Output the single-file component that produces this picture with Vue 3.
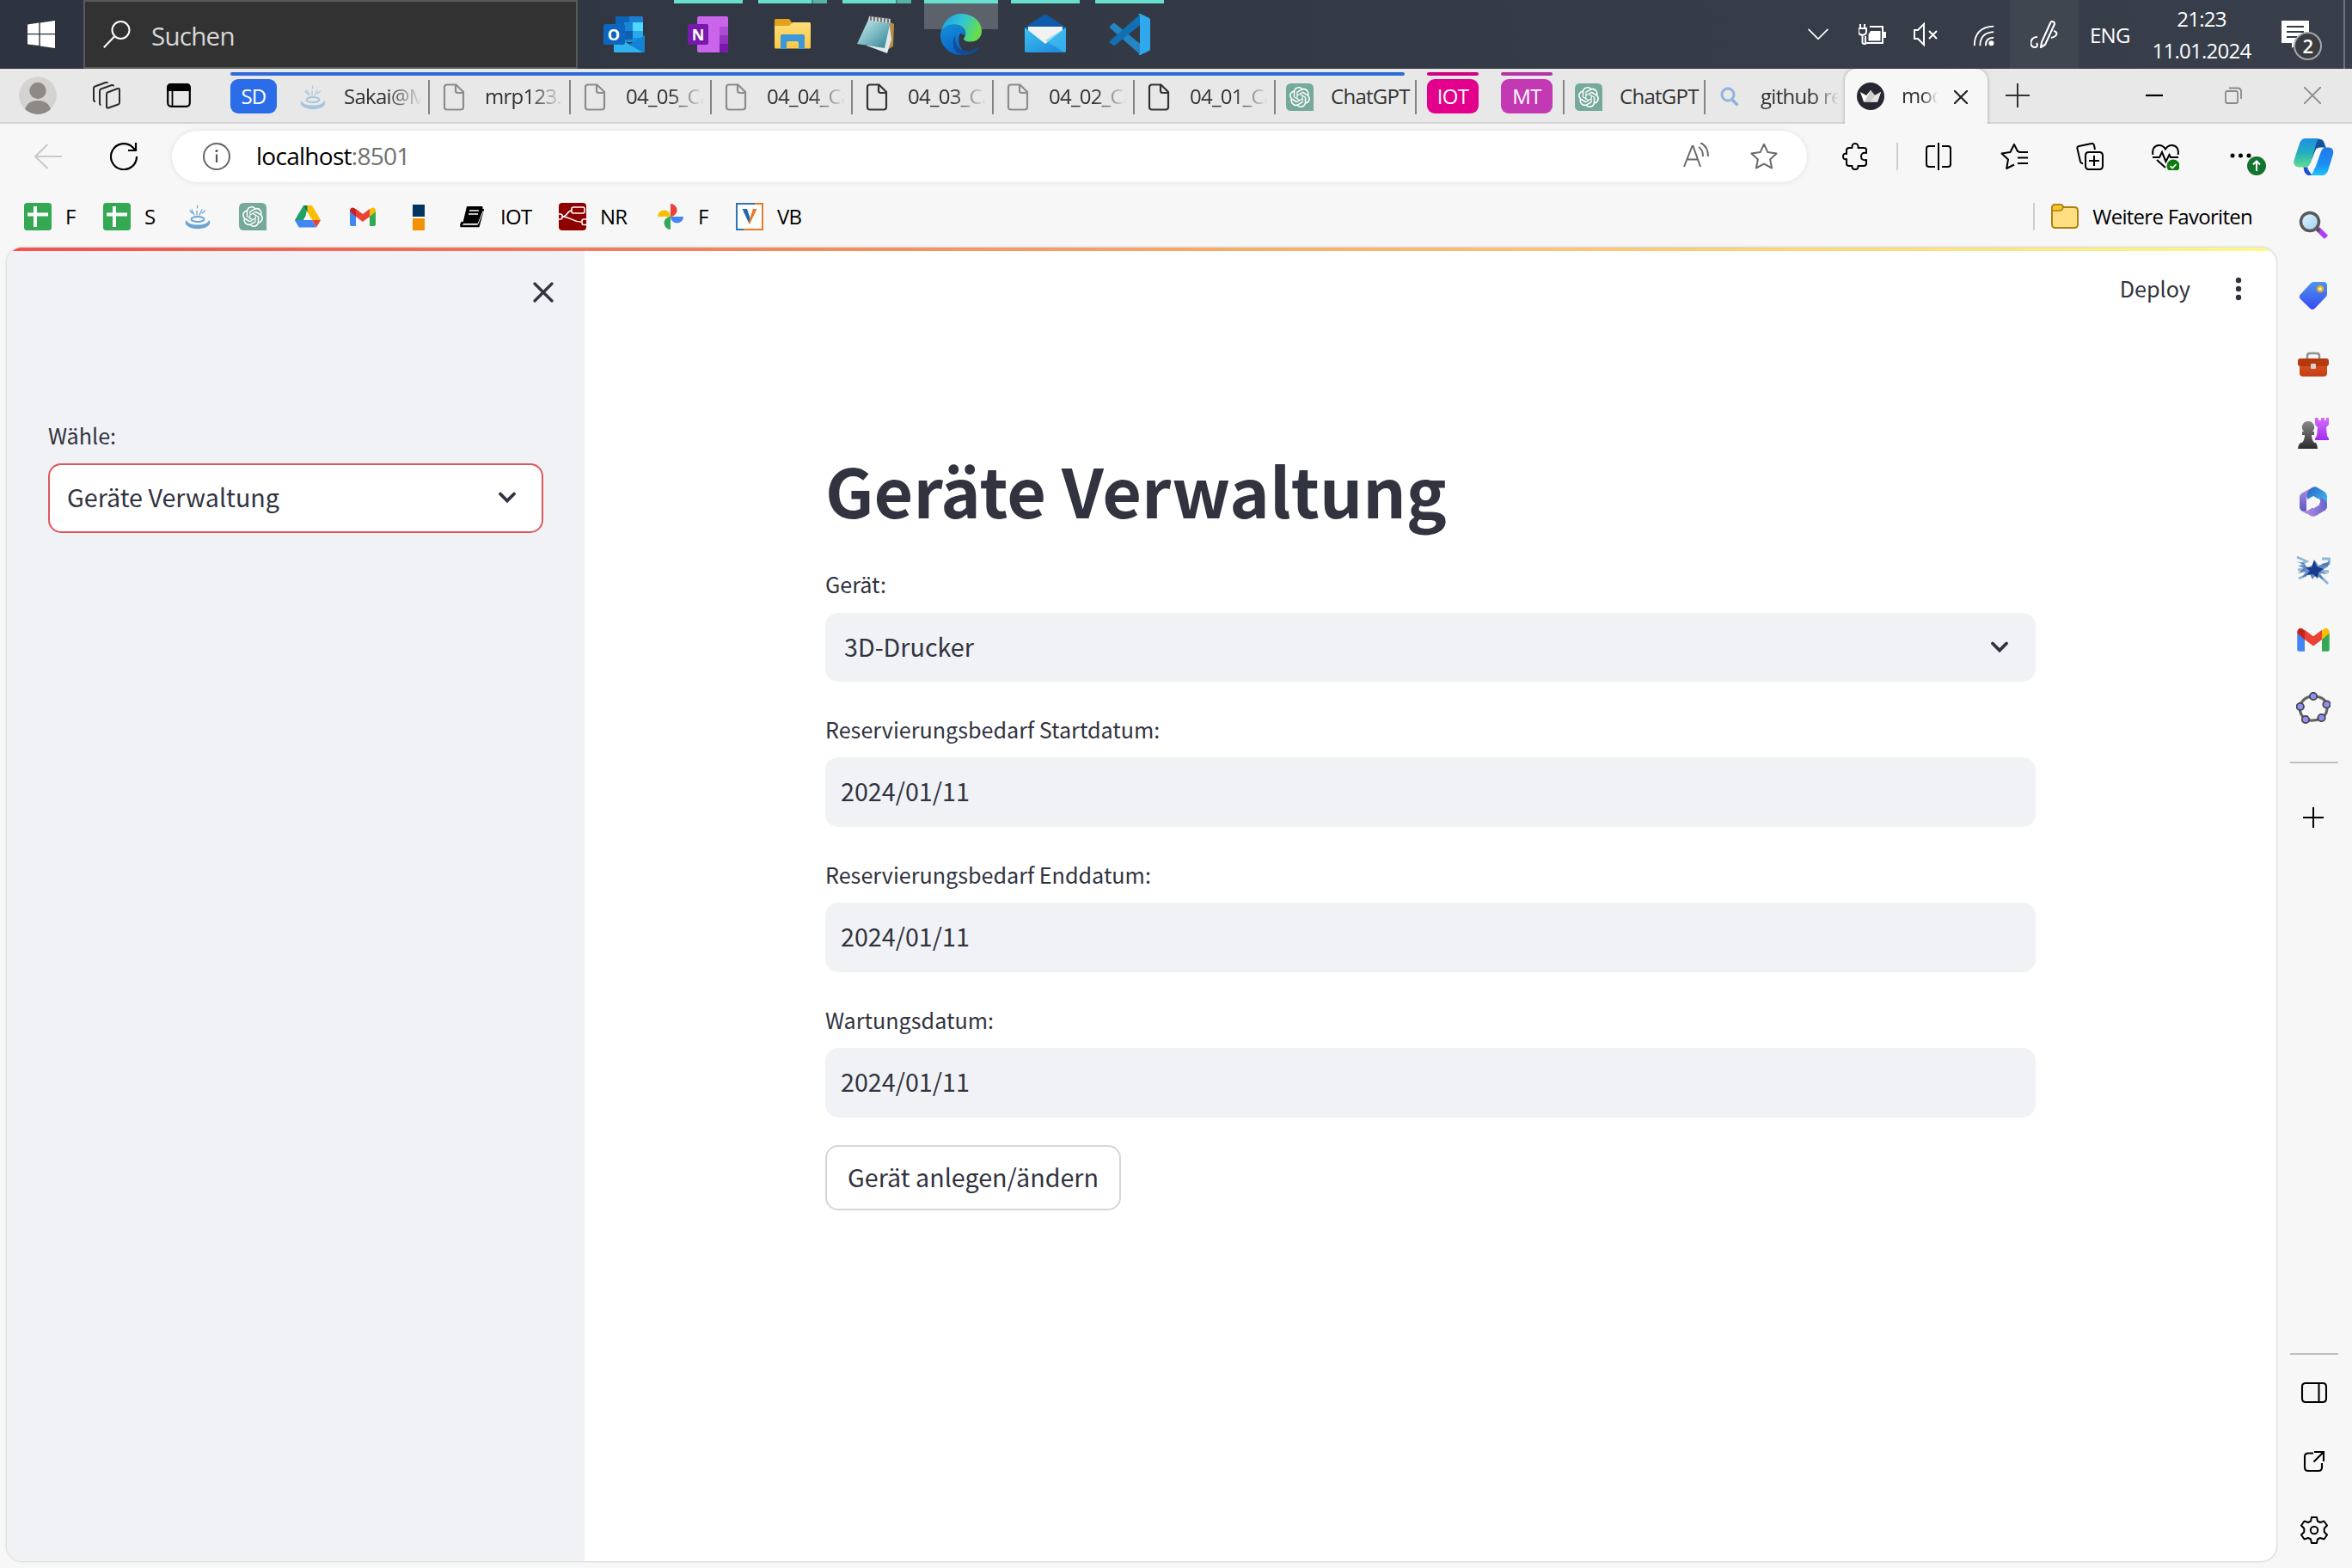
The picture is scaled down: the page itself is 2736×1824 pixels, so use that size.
<script setup>
const slots = [
  { id: 'outlook', bar: '', letter: 'O' },
  { id: 'onenote', bar: 'one', letter: 'N' },
  { id: 'explorer', bar: 'many' },
  { id: 'notepad', bar: 'many' },
  { id: 'edge', bar: 'active' },
  { id: 'mail', bar: 'one' },
  { id: 'vscode', bar: 'one' },
]
const tabs = [
  { icon: 'java', text: 'Sakai@M', pale: true },
  { icon: 'file', text: 'mrp123.g', pale: true },
  { icon: 'file', text: '04_05_Ca', pale: true },
  { icon: 'file', text: '04_04_Ca', pale: true },
  { icon: 'file', text: '04_03_Ca' },
  { icon: 'file', text: '04_02_Ca', pale: true },
  { icon: 'file', text: '04_01_Ca' },
  { icon: 'gpt', text: 'ChatGPT', full: true },
]
const bookmarks = [
  { icon: 'sheets', text: 'F', w: 12 },
  { icon: 'sheets', text: 'S', w: 14 },
  { icon: 'java' },
  { icon: 'gpt' },
  { icon: 'drive' },
  { icon: 'gmail' },
  { icon: 'blocks' },
  { icon: 'book', text: 'IOT', w: 36 },
  { icon: 'nodered', text: 'NR', w: 34 },
  { icon: 'photos', text: 'F', w: 12 },
  { icon: 'vb', text: 'VB', w: 30 },
]
const tools = ['searchapp', 'tag', 'toolbox', 'chess', 'm365', 'eagle', 'gmail', 'geogebra']
const dates = [
  { label: 'Reservierungsbedarf Startdatum:', value: '2024/01/11' },
  { label: 'Reservierungsbedarf Enddatum:', value: '2024/01/11' },
  { label: 'Wartungsdatum:', value: '2024/01/11' },
]
</script>

<template>
  <svg width="0" height="0" class="sprite">
    <defs>
      <linearGradient id="gEdgeA" x1="0" y1="0" x2="1" y2="0.3"><stop offset="0" stop-color="#1f9fe0" /><stop offset=".55" stop-color="#2fc5d6" /><stop offset="1" stop-color="#67dd4e" /></linearGradient>
      <linearGradient id="gEdgeB" x1="0" y1="0" x2="0.4" y2="1"><stop offset="0" stop-color="#1392dc" /><stop offset="1" stop-color="#0a63c4" /></linearGradient>
      <linearGradient id="gPad" x1="0" y1="0" x2="1" y2="1"><stop offset="0" stop-color="#d5eef0" /><stop offset=".5" stop-color="#7fbcc6" /><stop offset="1" stop-color="#2f7f92" /></linearGradient>
      <linearGradient id="gFold" x1="0" y1="0" x2="0" y2="1"><stop offset="0" stop-color="#ffdd79" /><stop offset="1" stop-color="#fbc745" /></linearGradient>
      <linearGradient id="gMail" x1="0" y1="0" x2="1" y2="1"><stop offset="0" stop-color="#3ec0f3" /><stop offset="1" stop-color="#1a86d8" /></linearGradient>
      <linearGradient id="gCopA" x1="0" y1="0" x2="0" y2="1"><stop offset="0" stop-color="#1f8fe3" /><stop offset=".5" stop-color="#22aec0" /><stop offset="1" stop-color="#62dd8c" /></linearGradient>
      <linearGradient id="gCopB" x1="0" y1="0" x2="0" y2="1"><stop offset="0" stop-color="#2377e8" /><stop offset=".6" stop-color="#1b8ef5" /><stop offset="1" stop-color="#20c3f7" /></linearGradient>
      <linearGradient id="gTag" x1="0" y1="0" x2="0" y2="1"><stop offset="0" stop-color="#4f93f0" /><stop offset="1" stop-color="#3848f0" /></linearGradient>
      <linearGradient id="gLens" x1="0" y1="0" x2="1" y2="1"><stop offset="0" stop-color="#e2f3fd" /><stop offset="1" stop-color="#9ed2f5" /></linearGradient>
      <linearGradient id="gPurple" x1="0" y1="0" x2="0" y2="1"><stop offset="0" stop-color="#d56cf7" /><stop offset="1" stop-color="#a02cf0" /></linearGradient>
      <linearGradient id="gPawn" x1="0" y1="0" x2="0" y2="1"><stop offset="0" stop-color="#8a8a8a" /><stop offset="1" stop-color="#2c2c2c" /></linearGradient>
      <linearGradient id="gBox" x1="0" y1="0" x2="0" y2="1"><stop offset="0" stop-color="#d9501c" /><stop offset="1" stop-color="#c03f14" /></linearGradient>
      <linearGradient id="gM1" x1="0" y1="0" x2="0" y2="1"><stop offset="0" stop-color="#b48be0" /><stop offset="1" stop-color="#4f55c8" /></linearGradient>
      <linearGradient id="gM2" x1="0" y1="0" x2="1" y2="1"><stop offset="0" stop-color="#2a62c4" /><stop offset="1" stop-color="#3fc5f2" /></linearGradient>
      <linearGradient id="gM3" x1="0" y1="0" x2="1" y2="0"><stop offset="0" stop-color="#c191e0" /><stop offset="1" stop-color="#6463cf" /></linearGradient>
    </defs>

    <symbol id="outlook" viewBox="0 0 48 48">
      <rect x="14" y="3" width="32" height="30" rx="2" fill="#1490df" />
      <path d="M14 5q0-2 2-2h14v10H14z" fill="#0c64b8" /><path d="M30 3h14q2 0 2 2v8H30z" fill="#1a7fd0" />
      <path d="M24 10h10v10H24z" fill="#1a86da" /><path d="M34 10h12v10H34z" fill="#50d9ff" /><path d="M24 20h10v10H24z" fill="#0f5fae" /><path d="M34 20h12v8H34z" fill="#28a8ea" />
      <path d="M48 25v18q0 2-2 2H14q-2 0-2-2V25l18 11z" fill="#1f9de6" /><path d="M12 25v18q0 2 2 2h32L24 32z" fill="#2fb4f0" /><path d="M48 25 30 36l16 9q2 0 2-2z" fill="#1482d4" />
      <rect x="0" y="12" width="25" height="24" rx="2" fill="#0c66bd" />
    </symbol>
    <symbol id="onenote" viewBox="0 0 48 48">
      <rect x="11" y="3" width="36" height="42" rx="2" fill="#ca64ea" />
      <path d="M37 15h10v10H37z" fill="#ae4bd5" /><path d="M37 25h10v10H37z" fill="#9332bf" /><path d="M37 35h10v8q0 2-2 2h-8z" fill="#7719aa" />
      <rect x="0" y="12" width="24" height="24" rx="2" fill="#7719aa" />
    </symbol>
    <symbol id="explorer" viewBox="0 0 48 48">
      <path d="M3 7.500q0-1.500 1.500-1.500H20l3 4v6H3z" fill="#e3a21a" />
      <path d="M3 14h17l4-4h19.500q1.500 0 1.500 1.500v27.500q0 1.500-1.500 1.500H4.500Q3 40.500 3 39z" fill="url(#gFold)" />
      <path d="M10 41V26q0-2 2-2h24q2 0 2 2v15h-7v-7q0-2-2-2H19q-2 0-2 2v7z" fill="#3a97d9" />
    </symbol>
    <symbol id="notepad" viewBox="0 0 48 48">
      <path d="M36 8l8 4-1 26-9 5z" fill="#b98b3e" /><path d="M38 8 41 30 36 46 12 37z" fill="#e4eaec" />
      <path d="M15 5 40 8 33 40 1 35z" fill="url(#gPad)" /><path d="M15 3 40 6l-1 5-25-3z" fill="#cfd6d8" />
      <path d="M17 2v6M21 2.500v6M25 3v6M29 3.500v6M33 4v6M37 4.500v6" stroke="#555" stroke-width="1.500" />
    </symbol>
    <symbol id="edge" viewBox="0 0 48 48">
      <path d="M1 21C3 8 13 0 24 0c14 0 24 9.500 24 20 0 8-6 12.500-13 12.500-5 0-8-1.500-8-3.200 0-1.500 2.300-2.300 2.300-6.300C29.300 17 24 12.500 17 12.500 9 12.500 3 16 1 21z" fill="url(#gEdgeA)" />
      <path d="M1 20C4 14.500 10 12 16 12.500 24 13 29 18 29 23c0 1-.3 2-.8 3-1.200-2-3.200-3-5.500-3-2 5-3 14 4 20 3 2.500 7 3 8 3C31 47.500 27 48 24 48 10 48 0 37 0 25c0-2 .4-3.500 1-5z" fill="url(#gEdgeB)" />
      <path d="M17.500 25c-2 10 4 18 13 18.500 5 .3 9-1.500 12.500-4.500 1-.8 2 0 1.300 1.200C40 46 33 48.300 25 48 15 46 12 33 17.500 25z" fill="#124c97" />
    </symbol>
    <symbol id="mail" viewBox="0 0 48 48">
      <path d="M0 16 21 2q3-2 6 0l21 14v8H0z" fill="#0e5bab" /><path d="M4 15h40v14L24 36 4 29z" fill="#f2f2f2" />
      <path d="M0 16 24 35 48 16v27q0 2-2 2H2q-2 0-2-2z" fill="url(#gMail)" /><path d="M48 16 24 31l22 14q2 0 2-2z" fill="#4ac8f5" opacity=".55" />
    </symbol>
    <symbol id="vscode" viewBox="0 0 48 48">
      <path d="M1.500 14 5 11.200q1-.7 2 0L37 35.500V48L1.200 16.500q-1.200-1.300.3-2.500z" fill="#2489ca" opacity=".95" />
      <path d="M1.500 34 5 36.800q1 .7 2 0L37 12.500V0L1.200 31.500q-1.200 1.300.3 2.500z" fill="#1070b3" />
      <path d="M34 47.500q1.500 1 3 .3l9.500-4.600q1.500-.8 1.500-2.500V7.300q0-1.700-1.500-2.500L37 .2q-1.500-.7-3 .3 2 0 2 2.500v42q0 2.500-2 2.500z" fill="#2fa8ee" />
    </symbol>

    <symbol id="file" viewBox="0 0 32 32"><path d="M8 1.500h10.500L27 10v17.500q0 3-3 3H8q-3 0-3-3v-23q0-3 3-3zM18 2v6.500q0 2.500 2.500 2.500H27" fill="none" stroke="currentColor" stroke-width="2.200" /></symbol>
    <symbol id="java" viewBox="0 0 32 32">
      <g fill="none" stroke="#6ba4d2" stroke-linecap="round"><path d="M15 14V9M12 14 9 8M18 14l3-6M15.500 6V3M9.500 12 7 9M21 12l3.500-3" stroke-width="1.200" />
        <ellipse cx="16" cy="19" rx="7.500" ry="3" stroke-width="2" /></g>
      <path d="M3 20c-2 2-2 5 2 7.500 6 3.500 16 3.500 22 0 4-2.500 4-5.500 2-7.500-1 4-6 5.500-13 5.500S4 24 3 20z" fill="#6ba4d2" />
    </symbol>
    <symbol id="gpt" viewBox="0 0 32 32">
      <path d="M6 0h20q6 0 6 6v26H6q-6 0-6-6V6q0-6 6-6z" fill="#75a99b" />
      <path transform="translate(4 4)" fill="#fff" d="M22.2819 9.8211a5.9847 5.9847 0 0 0-.5157-4.9108 6.0462 6.0462 0 0 0-6.5098-2.9A6.0651 6.0651 0 0 0 4.9807 4.1818a5.9847 5.9847 0 0 0-3.9977 2.9 6.0462 6.0462 0 0 0 .7427 7.0966 5.98 5.98 0 0 0 .511 4.9107 6.051 6.051 0 0 0 6.5146 2.9001A5.9847 5.9847 0 0 0 13.2599 24a6.0557 6.0557 0 0 0 5.7718-4.2058 5.9894 5.9894 0 0 0 3.9977-2.9001 6.0557 6.0557 0 0 0-.7475-7.0729zm-9.022 12.6081a4.4755 4.4755 0 0 1-2.8764-1.0408l.1419-.0804 4.7783-2.7582a.7948.7948 0 0 0 .3927-.6813v-6.7369l2.02 1.1686a.071.071 0 0 1 .038.052v5.5826a4.504 4.504 0 0 1-4.4945 4.4944zm-9.6607-4.1254a4.4708 4.4708 0 0 1-.5346-3.0137l.142.0852 4.783 2.7582a.7712.7712 0 0 0 .7806 0l5.8428-3.3685v2.3324a.0804.0804 0 0 1-.0332.0615L9.74 19.9502a4.4992 4.4992 0 0 1-6.1408-1.6464zM2.3408 7.8956a4.485 4.485 0 0 1 2.3655-1.9728V11.6a.7664.7664 0 0 0 .3879.6765l5.8144 3.3543-2.0201 1.1685a.0757.0757 0 0 1-.071 0l-4.8303-2.7865A4.504 4.504 0 0 1 2.3408 7.872zm16.5963 3.8558L13.1038 8.364 15.1192 7.2a.0757.0757 0 0 1 .071 0l4.8303 2.7913a4.4944 4.4944 0 0 1-.6765 8.1042v-5.6772a.79.79 0 0 0-.407-.667zm2.0107-3.0231l-.142-.0852-4.7735-2.7818a.7759.7759 0 0 0-.7854 0L9.409 9.2297V6.8974a.0662.0662 0 0 1 .0284-.0615l4.8303-2.7866a4.4992 4.4992 0 0 1 6.6802 4.66zM8.3065 12.863l-2.02-1.1638a.0804.0804 0 0 1-.038-.0567V6.0742a4.4992 4.4992 0 0 1 7.3757-3.4537l-.142.0805L8.704 5.459a.7948.7948 0 0 0-.3927.6813zm1.0976-2.3654l2.602-1.4998 2.6069 1.4998v2.9994l-2.5974 1.4997-2.6067-1.4997Z" />
    </symbol>
    <symbol id="sheets" viewBox="0 0 32 32"><rect width="32" height="32" rx="3.500" fill="#34a853" /><path d="M13 4v24M4 13.500h24" stroke="#fff" stroke-width="4" /></symbol>
    <symbol id="drive" viewBox="0 0 32 32">
      <path d="M11 3 1 20l5 8.500 7.500-13L16 3z" fill="#1ea362" /><path d="M11 3h10l-5 8.500z" fill="#188038" /><path d="M21 3h-5.500v8L21 20h10z" fill="#fbbc04" /><path d="M31 20H21l5 8.500z" fill="#ea4335" /><path d="M1 20h20l5 8.500H6z" fill="#4285f4" /><path d="M16 11.500 11 20h10z" fill="#f7f7f7" />
    </symbol>
    <symbol id="gmail" viewBox="0 0 32 32">
      <path d="M1 10v15q0 2 2 2h5V14z" fill="#4285f4" /><path d="M31 10v15q0 2-2 2h-5V14z" fill="#34a853" />
      <path d="M8 7v9l8 6 8-6V7l-8 6z" fill="#ea4335" /><path d="M1 9v1l7 6V7.500L6 6C4 4.500 1 6 1 9z" fill="#c5221f" /><path d="M31 9v1l-7 6V7.500L26 6c2-1.500 5 0 5 3z" fill="#fbbc04" />
    </symbol>
    <symbol id="blocks" viewBox="0 0 32 32"><path d="M10 2h14v14H10z" fill="#003560" /><path d="M10 18h14v14H10z" fill="#f39200" /></symbol>
    <symbol id="book" viewBox="0 0 32 32">
      <path d="M9 4h17q2 0 1.500 2L23 23q-.5 2-2.500 2H4z" fill="#000" /><path d="M4 22q-2 3-1.500 5h20L28 7" fill="none" stroke="#000" stroke-width="2.500" /><path d="M12 9h11M11 13h11" stroke="#fff" stroke-width="1.600" /><path d="M5 24.500h17l6-15" fill="none" stroke="#fff" stroke-width="1" />
    </symbol>
    <symbol id="nodered" viewBox="0 0 32 32">
      <rect width="32" height="32" rx="4" fill="#8f0000" /><g fill="none" stroke="#fff" stroke-width="1.600"><rect x="15" y="5" width="15" height="7" rx="2" /><path d="M0 13h2q2 0 2 2v2q0 2-2 2H0M32 19h-3q-2 0-2 2v2.500q0 2 2 2h3M4 16c7 0 5-7 11-7M4 16c10 0 11 6 22 6" /></g>
    </symbol>
    <symbol id="photos" viewBox="0 0 32 32">
      <path d="M16 1a7.500 7.500 0 0 1 0 15z" fill="#ea4335" /><path d="M31 16a7.500 7.500 0 0 1-15 0z" fill="#4285f4" /><path d="M16 31a7.500 7.500 0 0 1 0-15z" fill="#34a853" /><path d="M1 16a7.500 7.500 0 0 1 15 0z" fill="#fbbc04" />
    </symbol>
    <symbol id="vb" viewBox="0 0 32 32">
      <path d="M1 1h30v30H1z" fill="#fff" /><path d="M22 1H1v30h8" fill="none" stroke="#2b78b8" stroke-width="2" /><path d="M22 1h9v30H9" fill="none" stroke="#e8792b" stroke-width="2" />
      <path d="M7.500 7h5.500l4 12-1.500 5.500z" fill="#1f6ab0" /><path d="M24.500 7H20l-5 15 1 3z" fill="#e8792b" />
    </symbol>

    <symbol id="searchapp" viewBox="0 0 40 40"><path d="m25 24 10 10" stroke="#b23df2" stroke-width="6" /><path d="m22 22 5 5" stroke="#555" stroke-width="4" /><circle cx="16" cy="16" r="10.500" fill="url(#gLens)" stroke="#5a5a5e" stroke-width="3.500" /></symbol>
    <symbol id="tag" viewBox="0 0 40 40"><path d="M20 4h12q4 0 4 4v10q0 2-1.500 3.500L22 34.500q-3 3-6 0L5 24q-2.500-3 0-5.500L17 5.500Q18.500 4 20 4z" fill="url(#gTag)" /><circle cx="28" cy="12" r="3" fill="#fff" stroke="#e0b020" stroke-width="2.500" /></symbol>
    <symbol id="toolbox" viewBox="0 0 40 40"><path d="M13 13V10q0-3 3-3h8q3 0 3 3v3" fill="none" stroke="#8f8f8f" stroke-width="2.500" /><path d="M4 20h32v10q0 4-4 4H8q-4 0-4-4z" fill="url(#gBox)" /><path d="M5 13h30q3 0 3 3v3q0 3-3 3H5q-3 0-3-3v-3q0-3 3-3z" fill="#b5380f" /><rect x="17" y="19" width="6" height="6" rx="1" fill="#d4d4d4" /></symbol>
    <symbol id="chess" viewBox="0 0 40 40"><path d="M22 2h4v3h3V2h4v3h2V2h3v8l-3 3 1 10 2 3v2H22v-2l2-3 1-10-3-3z" fill="url(#gPurple)" /><path d="M14 6a7 7 0 0 1 5 12h2v4h-3q0 6 3 9h2q2 3 2 7H2q0-4 3-7h2q3-3 3-9H7v-4h2A7 7 0 0 1 14 6z" fill="url(#gPawn)" /></symbol>
    <symbol id="m365" viewBox="0 0 40 40">
      <path d="M19 3 7 9.500q-3 1.500-3 5v11q0 3.500 3 5l6 3.500q-1-2-1-4V15l7-5z" fill="url(#gM1)" /><path d="M19 3q3-1.500 6 .2L33 8q3 2 3 5v12L26 16 13 22V10q0-3 6-7z" fill="url(#gM2)" /><path d="M36 24v1q0 3.500-3 5l-10 6q-3 1.500-6 0l-10-6q5 1 8-1l13-8V15q8 2 8 9z" fill="url(#gM3)" /><path d="M20 13 27 17v6.500l-7 4-7-4V17z" fill="#f7f7f7" />
    </symbol>
    <symbol id="eagle" viewBox="0 0 40 40">
      <g fill="none" stroke="#8fb9d6" stroke-width="3"><path d="M1 4 12 9 6 12M30 6h9l-1 6-8 1M3 29l9-4M28 26l9 9M2 19l8-1M38 21l-8-1" /></g>
      <path d="M0 9 9 11l4 5 5-2 4-6 4 6 13-5-2 6-8 5 8 4-9-1 4 8-9-6-4 5-3-6-9 4 4-7-9 2 7-6-7-3 7-1z" fill="#3567ab" opacity=".75" /><path d="m21 7 3 8 8 3-6 4-1 7-5-5-8 1 4-5-5-4 7 0z" fill="#153c8f" />
    </symbol>
    <symbol id="geogebra" viewBox="0 0 40 40">
      <path d="M20 6q13 0 16 10 1 11-6 15-9 5-19 2-7-5-7-15Q8 6 20 6z" fill="none" stroke="#666" stroke-width="3.200" stroke-linejoin="round" />
      <g fill="#8f8ff5" stroke="#444" stroke-width="1.800"><circle cx="20" cy="6" r="4.200" /><circle cx="35.500" cy="15.500" r="4.200" /><circle cx="29.500" cy="31" r="4.200" /><circle cx="11" cy="33" r="4.200" /><circle cx="4.800" cy="18" r="4.200" /></g>
    </symbol>
  </svg>

  <div class="screen">
    <header class="taskbar">
      <svg class="win" viewBox="0 0 32 32"><path d="M0 4.400 13.300 2.600V15H0zM14.700 2.400 32 0v15H14.700zM0 16.300h13.300V29L0 27.600zM14.700 16.300H32V32l-17.300-2.600z" fill="#fff" /></svg>
      <div class="search">
        <svg viewBox="0 0 32 32"><circle cx="20.500" cy="11" r="10" fill="none" stroke="#fff" stroke-width="2" /><path d="M13.500 18 .8 31.200" stroke="#fff" stroke-width="2" /></svg>
        <span>Suchen</span>
      </div>
      <nav class="slots">
        <div v-for="s in slots" :key="s.id" class="slot" :class="s.bar">
          <svg><use :href="'#' + s.id" /></svg><b v-if="s.letter">{{ s.letter }}</b>
        </div>
      </nav>
      <div class="tray">
        <svg class="ic" viewBox="0 0 32 32"><path d="m3 9 13 13L29 9" fill="none" stroke="#fff" stroke-width="2" /></svg>
        <svg class="ic bat" viewBox="0 0 32 32"><path d="M2 4v5M7 4v5M0 9h9v4q0 3-3 3.500H3Q0 16 0 13zM4.500 16v9q0 2 2 2H9" fill="none" stroke="#fff" stroke-width="2" /><path d="M13 7h15v19H8v-8" fill="none" stroke="#fff" stroke-width="2" /><path d="M14 12h11.500v11.500h-14V16zM29 13h3v7h-3z" fill="#fff" /></svg>
        <svg class="ic vol" viewBox="0 0 32 32"><path d="M2 11h4l7-7v24l-7-7H2zM19 12l9 9M28 12l-9 9" fill="none" stroke="#fff" stroke-width="2" /></svg>
        <svg class="ic wifi" viewBox="0 0 32 32"><g fill="none" stroke="#fff" stroke-width="2"><path d="M4 30Q4 7 28 6M11 30q0-16 17-17M18 30q0-10 10-10" /></g><circle cx="25" cy="27" r="3.200" fill="#fff" /></svg>
        <div class="pen"><svg viewBox="0 0 32 32"><path d="M25 1q3 0 3 3L17 28l-5 3 1-6L23 3q.7-2 2-2zM8 19c-9 0-10 12-3 12 4 0 3-4 2-5M27 12c5 1 5 6-3 8" fill="none" stroke="#fff" stroke-width="2.100" /></svg></div>
        <span class="lang">ENG</span>
        <div class="clock"><span>21:23</span><span>11.01.2024</span></div>
        <div class="note"><svg viewBox="0 0 36 48"><path d="M0 0h32v26H18l-6 6v-6H0z" fill="#fff" /><path d="M6 7h20M6 13h20M6 19h12" stroke="#333a45" stroke-width="2" /></svg><b>2</b></div>
        <i class="peek"></i>
      </div>
    </header>

    <div class="strip">
      <svg class="avatar" viewBox="0 0 44 44"><clipPath id="cpA"><circle cx="22" cy="22" r="22" /></clipPath><g clip-path="url(#cpA)"><circle cx="22" cy="22" r="22" fill="#d5d3d0" /><circle cx="22" cy="16.500" r="9.700" fill="#8d8a86" /><path d="M6 46q0-18 16-18t16 18z" fill="#8d8a86" /></g></svg>
      <svg class="ws" viewBox="0 0 32 32"><g fill="none" stroke="#2b2b2b" stroke-width="2" stroke-linejoin="round"><path d="M17 12.500 29 8q2-.5 2 1.500v15q0 1.500-1.500 2L18 30.500q-2 .5-2-1.500V15q0-2 1-2.500z" /><path d="M9.500 27q-1.500 0-1.500-2V11q0-2 1.500-2.500L22 4q2-.5 2 1.500" /><path d="M3 23q-2 0-2-2V7.500q0-1.500 1.500-2L15 1q2-.5 2 1" /></g></svg>
      <svg class="ta" viewBox="0 0 32 32"><rect x="3.200" y="3.200" width="25.600" height="25.600" rx="4" fill="none" stroke="#000" stroke-width="2.200" /><path d="M3 10V7q0-4 4-4h18q4 0 4 4v3zM8.500 10v18" stroke="#000" stroke-width="1.800" /></svg>
      <div class="group">
        <span class="badge sd">SD</span>
        <div v-for="t in tabs" :key="t.text" class="tab" :class="{ pale: t.pale }">
          <svg><use :href="'#' + t.icon" /></svg><span class="txt" :class="{ full: t.full }">{{ t.text }}</span>
        </div>
      </div>
      <span class="badge iot">IOT</span>
      <span class="badge mt">MT</span>
      <div class="tab lead"><svg><use href="#gpt" /></svg><span class="txt full">ChatGPT</span></div>
      <div class="tab gh"><svg viewBox="0 0 32 32"><circle cx="14" cy="13" r="7" fill="none" stroke="#8fb4dc" stroke-width="3" /><path d="m18.500 18.500 7 7" stroke="#8fb4dc" stroke-width="3.500" /></svg><span class="txt late">github re</span></div>
      <div class="tab on">
        <svg viewBox="0 0 32 32"><circle cx="16" cy="16" r="16" fill="#262730" /><path d="m4 11 7 4 5-6 5 6 7-4-4 11.500H8z" fill="#fff" /><path d="m16 9 5 6-3 7.500h-9z" fill="#ccc" /><path d="m28 11-4 11.500h-8l5-7.500z" fill="#e4e4e4" /></svg>
        <span class="txt">mod</span>
        <svg class="x" viewBox="0 0 16 16"><path d="m0 0 16 16M16 0 0 16" stroke="#222" stroke-width="2.200" /></svg>
      </div>
      <svg class="plus" viewBox="0 0 28 28"><path d="M14 0v28M0 14h28" stroke="#333" stroke-width="2" /></svg>
      <div class="winbtns">
        <span><svg viewBox="0 0 20 20"><path d="M0 10h20" stroke="#000" stroke-width="2.200" /></svg></span>
        <span><svg viewBox="0 0 20 20"><path d="M1 7q0-2 2-2h10q2 0 2 2v10q0 2-2 2H3q-2 0-2-2zM5 1.500h10q4 0 4 4V14" fill="none" stroke="#8a8a8a" stroke-width="1.800" /></svg></span>
        <span><svg viewBox="0 0 20 20"><path d="m0 0 20 20M20 0 0 20" stroke="#8a8a8a" stroke-width="1.800" /></svg></span>
      </div>
    </div>

    <div class="toolbar">
      <svg class="back" viewBox="0 0 32 32"><path d="M32 16H1M15.500 2 1 16l14.500 14" fill="none" stroke="#c9c9c9" stroke-width="2" /></svg>
      <svg class="reload" viewBox="0 0 32 32"><path d="M31 16A15 15 0 1 1 26 5l3.500 3.500M30 0v9h-9" fill="none" stroke="#000" stroke-width="2.200" /></svg>
      <div class="url">
        <svg class="info" viewBox="0 0 32 32"><circle cx="16" cy="16" r="15" fill="none" stroke="#666" stroke-width="2" /><path d="M16 13.500V23" stroke="#555" stroke-width="2.200" /><circle cx="16" cy="9.500" r="1.600" fill="#555" /></svg>
        <span class="addr">localhost<em>:8501</em></span>
        <svg class="aloud" viewBox="0 0 32 32"><path d="m2 28 9.500-24h1L21 28M5.500 19.500h13M19 5q5 3 5 11M21 0q9 4 9 16" fill="none" stroke="#6b6b6b" stroke-width="2" /></svg>
        <svg class="star" viewBox="0 0 32 32"><path d="m16 1.800 4.400 9.300 10.200 1.300-7.500 7 2 10.100L16 24.600l-9.100 4.900 2-10.100-7.500-7 10.200-1.300z" fill="none" stroke="#6b6b6b" stroke-width="2" stroke-linejoin="round" /></svg>
      </div>
      <div class="acts">
        <svg viewBox="0 0 32 32"><path d="M9 6q-3 0-3 3v4Q2 12 2 16t4 3v5q0 3 3 3h3.500q-.5 4 3.500 4t3.500-4H26q3 0 3-3v-4q-6 1-6-4t6-4V8q0-2-3-2h-6.500q.5-5-3.500-5t-3.500 5z" fill="none" stroke="#000" stroke-width="2" stroke-linejoin="round" /></svg>
        <i></i>
        <svg viewBox="0 0 32 32"><path d="M16 0v32M12 4H5Q2 4 2 7v18q0 3 3 3h7M20 4h7q3 0 3 3v18q0 3-3 3h-7" fill="none" stroke="#000" stroke-width="2" /></svg>
        <svg viewBox="0 0 32 32"><path d="M22 10.500 20 10 16 2l-4.500 9L1.500 12.500l7.500 7L7.200 30l8.800-4.500M21 11h11M20 17.500h12M20 24h12" fill="none" stroke="#000" stroke-width="2" stroke-linejoin="round" /></svg>
        <svg viewBox="0 0 32 32"><path d="M22 8 21 3q-.7-2.500-3-2L3.500 4Q1 4.600 1.500 7L5 22q.6 2 3 2M15 11h12q4 0 4 4v12q0 4-4 4H15q-4 0-4-4V15q0-4 4-4zM21 15v12M15 21h12" fill="none" stroke="#000" stroke-width="2" /></svg>
        <svg viewBox="0 0 32 32"><path d="M1.500 14C0 8 3 3 8.500 3 12 3 14.500 5 16 7.500 17.500 5 20 3 23.500 3 29 3 32 8 30.500 14M1 17h8l3-6 4.500 11 4-8 1.500 3h9M6 20l10 9" fill="none" stroke="#000" stroke-width="2" /><circle cx="25" cy="27" r="7.500" fill="#0f7b0f" /><path d="m21.500 27 2.500 2.500 4.500-4.500" fill="none" stroke="#fff" stroke-width="1.700" /></svg>
        <svg class="more" viewBox="0 0 44 44"><g fill="#000"><circle cx="5" cy="21" r="2.500" /><circle cx="14.500" cy="21" r="2.500" /><circle cx="24" cy="21" r="2.500" /></g><circle cx="33" cy="33" r="11.500" fill="#f7f7f7" /><circle cx="33" cy="33" r="11" fill="#13742f" /><path d="M33 39V27.500M29 31.500l4-4 4 4" fill="none" stroke="#fff" stroke-width="2" /></svg>
        <svg class="copilot" viewBox="0 0 48 48"><path d="M22 3h10q4 0 5.500 5l2 6H28l-6 14z" fill="#15509c" /><path d="M14 2h18q-3 1-4.500 6l-6 22Q19 37 15 37H7q-9 0-6-10L7 9q2-7 7-7z" fill="url(#gCopA)" /><path d="M12 37h5q3 10 9 10h-7q-4 0-6-5z" fill="#1a4fd0" /><path d="M26 47h-6q3-1 4.500-6l7-21q2-7 7-7h3q9 0 6 10l-5 16q-2 8-8 8z" fill="url(#gCopB)" /><path d="M33 13h6q-4 0-6 6l-6 17q-1.500 4-6 4h-5q3-1 4.500-5l5-16q2-6 7.500-6z" fill="#f7f7f7" /></svg>
      </div>
    </div>

    <div class="body">
      <div class="left">
        <div class="marks">
          <div v-for="(b, k) in bookmarks" :key="k" class="mark">
            <svg><use :href="'#' + b.icon" /></svg><span v-if="b.text" :style="{ width: b.w + 'px' }">{{ b.text }}</span>
          </div>
          <div class="others">
            <svg viewBox="0 0 32 32"><path d="M1 6q0-4 4-4h6q2 0 3 3h13q4 0 4 4v16q0 4-4 4H5q-4 0-4-4z" fill="#ffdf82" stroke="#ad7f10" stroke-width="2" /><path d="M1 9V6q0-4 4-4h6q2.500 0 3 3-1 4-4 4z" fill="#f5c62e" stroke="#ad7f10" stroke-width="1.600" /></svg>
            <span>Weitere Favoriten</span>
          </div>
        </div>
        <div class="page">
          <aside>
            <svg class="close" viewBox="0 0 24 24"><path d="m2 2 20 20M22 2 2 22" stroke="#31333f" stroke-width="3.200" stroke-linecap="round" /></svg>
            <label>Wähle:</label>
            <div class="select"><span>Geräte Verwaltung</span><svg viewBox="0 0 20 14"><path d="m2 2.500 8 8 8-8" fill="none" stroke="#31333f" stroke-width="3.800" stroke-linecap="round" /></svg></div>
          </aside>
          <main>
            <div class="top"><span>Deploy</span><svg viewBox="0 0 8 28"><circle cx="4" cy="4" r="3.200" /><circle cx="4" cy="14" r="3.200" /><circle cx="4" cy="24" r="3.200" /></svg></div>
            <div class="form">
              <h1>Geräte Verwaltung</h1>
              <label class="first">Gerät:</label>
              <div class="field sel"><span>3D-Drucker</span><svg viewBox="0 0 20 14"><path d="m2 2.500 8 8 8-8" fill="none" stroke="#31333f" stroke-width="3.800" stroke-linecap="round" /></svg></div>
              <template v-for="d in dates" :key="d.label">
                <label>{{ d.label }}</label>
                <div class="field"><span>{{ d.value }}</span></div>
              </template>
              <button>Gerät anlegen/ändern</button>
            </div>
          </main>
        </div>
      </div>
      <div class="rail">
        <svg v-for="t in tools" :key="t" class="tool"><use :href="'#' + t" /></svg>
        <hr />
        <svg class="add" viewBox="0 0 24 24"><path d="M12 0v24M0 12h24" stroke="#000" stroke-width="2" /></svg>
        <div class="grow"></div>
        <hr class="low" />
        <svg class="foot" viewBox="0 0 32 32"><path d="M6 5h20q4 0 4 4v14q0 4-4 4H6q-4 0-4-4V9q0-4 4-4zM21.500 5v22" fill="none" stroke="#000" stroke-width="2.100" /></svg>
        <svg class="foot" viewBox="0 0 32 32"><path d="M15 6.500H9q-4 0-4 4V23q0 4 4 4h12q4 0 4-4v-5M16 5h11v11M27 5 15.500 16.500" fill="none" stroke="#000" stroke-width="2.100" /></svg>
        <svg class="foot gear" viewBox="0 0 32 32"><path d="M13 1h6l1 4.500 3 1.500 4.500-1.500L31 10.500l-3.300 3.500v4l3.300 3.500-3.500 5L23 25l-3 1.500-1 4.500h-6l-1-4.500L9 25l-4.500 1.500L1 21.500 4.300 18v-4L1 10.500l3.500-5L9 7l3-1.500z" fill="none" stroke="#000" stroke-width="2" stroke-linejoin="round" /><circle cx="16" cy="16" r="4.200" fill="none" stroke="#000" stroke-width="2" /></svg>
      </div>
    </div>
  </div>
</template>

<style>
html, body { margin: 0; background: #f7f7f7; overflow: hidden; }
</style>

<style scoped>
* { box-sizing: border-box; }
svg { display: block; flex: none; }
.screen { width: 2736px; height: 1824px; display: flex; flex-direction: column; background: #f7f7f7; font-family: "Open Sans", "Noto Sans", sans-serif; font-size: 24px; letter-spacing: -0.03em; color: #1b1b1b; white-space: nowrap; overflow: hidden; }

.taskbar { height: 80px; flex: none; display: flex; background: linear-gradient(90deg, #2d343f, #333a46 50%, #383e4a); color: #fff; }
.win { width: 32px; height: 32px; margin: 24px 33px 0 32px; }
.search { width: 575px; height: 80px; border: 2px solid #5a5a5a; background: #323232; display: flex; align-items: center; padding-left: 21px; font-size: 29.5px; color: #d8d8d8; }
.search svg { width: 32px; height: 32px; margin-right: 24px; }
.search span { padding-top: 2px; }
.slots { display: flex; margin-left: 5px; }
.slot { width: 98px; height: 80px; display: flex; align-items: center; justify-content: center; position: relative; }
.slot svg { width: 48px; height: 48px; position: relative; }
.slot b { position: absolute; left: 25px; top: 28px; width: 24px; line-height: 24px; text-align: center; font-size: 18px; letter-spacing: 0; }
.slot::before { content: ""; position: absolute; top: 0; left: 9px; width: 80px; height: 4px; }
.one::before { background: #67dfcf; }
.many::before { background: linear-gradient(90deg, #67dfcf 62px, #3f8a81 62px, #3f8a81 64px, #56b3a6 64px); }
.active::before { left: 6px; width: 86px; height: 46px; background: linear-gradient(#67dfcf 4px, #5b626c 4px); height: 34px; }
.tray { margin-left: auto; display: flex; align-items: center; }
.ic { width: 28px; height: 28px; }
.bat { width: 32px; height: 32px; margin-left: 33px; }
.vol { width: 32px; height: 32px; margin-left: 31px; }
.wifi { width: 30px; height: 30px; margin-left: 36px; }
.pen { width: 80px; height: 80px; background: #3f4650; display: flex; align-items: center; justify-content: center; margin-left: 15px; }
.pen svg { width: 32px; height: 32px; }
.lang { width: 54px; margin-left: 13px; padding-top: 1px; }
.clock { width: 130px; margin-left: 11px; display: flex; flex-direction: column; align-items: center; line-height: 37px; }
.note { position: relative; width: 50px; height: 80px; padding-top: 24px; margin-left: 28px; }
.note svg { width: 36px; height: 48px; }
.note b { position: absolute; left: 14px; top: 37px; width: 33px; height: 33px; border-radius: 50%; border: 2px solid #a5a8ac; background: #3b3d40; font-size: 22px; font-weight: 600; line-height: 29px; text-align: center; }
.peek { width: 2px; height: 80px; background: #6d737c; margin: 0 8px 0 22px; }

.strip { height: 64px; flex: none; display: flex; align-items: center; background: #e8e8e8; border-bottom: 2px solid #d4d4d4; }
.avatar { width: 44px; height: 44px; margin-left: 22px; }
.ws { width: 32px; height: 32px; margin-left: 42px; }
.ta { width: 32px; height: 32px; margin-left: 52px; }
.group { margin-left: 44px; display: flex; align-items: center; position: relative; height: 62px; }
.group::before { content: ""; position: absolute; left: 0; right: 14px; top: 4px; height: 4px; border-radius: 2px; background: #2f6bd8; }
.badge { height: 40px; border-radius: 9px; color: #fff; display: flex; align-items: center; justify-content: center; position: relative; margin-top: 2px; padding-bottom: 1px; }
.sd { width: 54px; background: #2b6de8; margin-right: 14px; }
.iot { width: 60px; background: #e3008c; margin-left: 12px; }
.mt { width: 60px; background: #c239b3; margin-left: 26px; margin-right: 12px; }
.iot::before, .mt::before { content: ""; position: absolute; left: 0; right: 0; top: -8px; height: 4px; border-radius: 2px; background: inherit; filter: brightness(.92); }
.tab { width: 164px; height: 40px; margin-top: 4px; border-right: 2px solid #858585; display: flex; align-items: center; padding-left: 12px; color: #333; }
.tab > svg { width: 32px; height: 32px; margin: -1px 20px 0 0; }
.pale > svg { opacity: .5; }
.lead { width: 166px; border-left: 2px solid #858585; }
.gh { width: 162px; border: 0; }
.txt { width: 91px; padding-bottom: 4px; overflow: hidden; -webkit-mask-image: linear-gradient(90deg, #000 58%, transparent 100%); mask-image: linear-gradient(90deg, #000 58%, transparent 100%); }
.txt.full { width: 94px; -webkit-mask-image: none; mask-image: none; }
.txt.late { -webkit-mask-image: linear-gradient(90deg, #000 68%, transparent 100%); mask-image: linear-gradient(90deg, #000 68%, transparent 100%); }
.on { width: 166px; height: 64px; margin: 0 0 -2px; border: 0; background: #f7f7f7; border-radius: 14px 14px 0 0; padding-left: 14px; box-shadow: 0 0 4px rgba(0, 0, 0, .3); clip-path: inset(0 -6px 0 -6px); }
.on .txt { width: 42px; }
.tab .x { width: 16px; height: 16px; margin: 2px 0 0 19px; }
.plus { width: 28px; height: 28px; margin-left: 21px; }
.winbtns { margin-left: auto; display: flex; }
.winbtns span { width: 92px; display: flex; justify-content: center; }
.winbtns svg { width: 20px; height: 20px; }

.toolbar { height: 76px; flex: none; display: flex; align-items: center; }
.back { width: 32px; height: 32px; margin-left: 40px; }
.reload { width: 32px; height: 32px; margin: 0 40px 0 56px; }
.url { width: 1902px; height: 60px; border-radius: 30px; background: #fff; box-shadow: 0 0 6px rgba(0, 0, 0, .1); display: flex; align-items: center; padding-left: 36px; }
.info, .star { width: 32px; height: 32px; }
.addr { margin-left: 30px; padding-bottom: 2px; font-size: 28px; color: #000; }
.addr em { font-style: normal; color: #707070; }
.aloud { width: 32px; height: 32px; margin: 0 47px 0 auto; }
.star { margin-right: 34px; }
.acts { display: flex; align-items: center; margin-left: 40px; }
.acts svg { width: 32px; height: 32px; margin-right: 56px; }
.acts i { width: 2px; height: 32px; background: #cfcfcf; margin: 0 31px 0 -24px; }
.acts .more { width: 44px; height: 44px; margin: 0 31px 0 1px; }
.acts .copilot { width: 48px; height: 46px; margin: 0; }

.body { flex: 1; display: flex; min-height: 0; }
.left { width: 2656px; display: flex; flex-direction: column; }
.marks { height: 68px; display: flex; align-items: center; gap: 32px; padding-left: 28px; padding-bottom: 4px; color: #000; }
.mark { display: flex; align-items: center; gap: 16px; }
.mark span, .others span { padding-bottom: 2px; }
.mark svg { width: 32px; height: 32px; }
.others { margin-left: auto; display: flex; align-items: center; gap: 16px; height: 32px; border-left: 2px solid #cfcfcf; padding: 0 36px 0 19px; }
.others svg { width: 32px; height: 32px; }
.page { width: 2640px; height: 1528px; margin-left: 8px; border-radius: 18px; background: linear-gradient(90deg, #f05252, #f5925f 40%, #fcd07a 76%, #fcfa8c) 0 0 / 100% 4px no-repeat, #fff; display: flex; overflow: hidden; padding-top: 4px; box-shadow: 0 0 3px rgba(0, 0, 0, .28); font-family: "Noto Sans CJK SC", sans-serif; letter-spacing: 0; color: #31333f; }
aside { width: 672px; background: #f0f2f6; display: flex; flex-direction: column; padding: 36px 48px 0; }
.close { width: 24px; height: 24px; align-self: flex-end; margin-right: -12px; }
.page label { display: block; font-size: 25.15px; line-height: 38px; }
aside label { margin-top: 135px; }
.select, .field { height: 81px; display: flex; align-items: center; font-size: 28.7px; border-radius: 15px; padding-bottom: 4px; }
.select svg, .field svg { width: 20px; height: 14px; margin: 3px 0 0 auto; }
.select { margin-top: 14px; border: 2px solid #e0565b; background: #fff; padding-left: 20px; padding-right: 30px; }
main { flex: 1; }
.top { display: flex; justify-content: flex-end; align-items: center; height: 88px; padding-right: 40px; font-size: 25.2px; }
.top span { padding-bottom: 2px; }
.top svg { width: 8px; height: 28px; margin-left: 52px; fill: #31333f; }
.form { width: 1408px; margin: 136px 0 0 280px; }
h1 { margin: 0 0 38px; font-size: 78.9px; line-height: 106px; font-weight: 700; }
.form label { margin-top: 36px; }
.form label.first { margin-top: 0; }
.field { margin-top: 14px; background: #f0f2f6; padding-left: 18px; padding-right: 32px; }
.field.sel { margin-top: 15px; height: 80px; padding-left: 22px; }
button { margin-top: 32px; display: flex; align-items: center; justify-content: center; width: 344px; height: 76px; padding: 0 0 4px; border: 2px solid #d5d6d9; border-radius: 15px; background: #fff; font: inherit; font-size: 28.7px; color: inherit; }

.rail { width: 80px; display: flex; flex-direction: column; align-items: center; padding: 22px 0 0; }
.tool { width: 40px; height: 40px; margin: 0 10px 40px 0; }
.tool:first-child { margin-bottom: 42px; }
.rail hr { width: 56px; height: 2px; border: 0; margin: 2px 8px 0 0; background: #bfbfbf; flex: none; }
.add { width: 24px; height: 24px; margin: 51px 10px 0 0; }
.grow { flex: 1; }
.rail hr.low { margin: 0 8px 28px 0; }
.foot { width: 32px; height: 32px; margin: 0 8px 48px 0; }
.foot.gear { margin-bottom: 28px; }
</style>
